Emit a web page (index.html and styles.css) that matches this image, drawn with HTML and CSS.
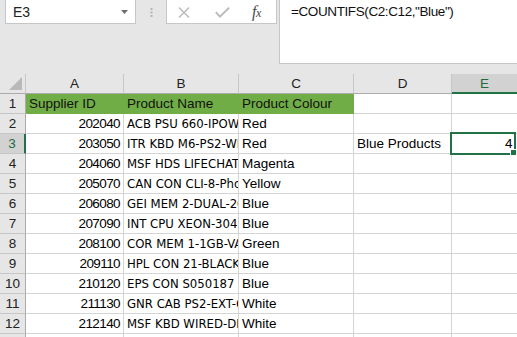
FILE: index.html
```html
<!DOCTYPE html>
<html>
<head>
<meta charset="utf-8">
<link rel="stylesheet" href="styles.css">
</head>
<body>
<div class="app">
  <div class="toolbar">
    <div class="namebox">
      <span class="ref">E3</span>
      <svg class="caret" width="7" height="4" viewBox="0 0 7 4"><path d="M0 0H7L3.5 4Z" fill="#6d6d6d"/></svg>
    </div>
    <div class="grip">
      <svg width="3" height="9" viewBox="0 0 3 9"><rect x="0.5" y="0" width="2" height="2" fill="#b4b4b4"/><rect x="0.5" y="3.5" width="2" height="2" fill="#b4b4b4"/><rect x="0.5" y="7" width="2" height="2" fill="#b4b4b4"/></svg>
    </div>
    <div class="fbtns">
      <svg class="ico-x" width="12" height="11" viewBox="0 0 12 11"><path d="M1 0.5L11 10.5M11 0.5L1 10.5" stroke="#b9b9b9" stroke-width="1.4" fill="none"/></svg>
      <svg class="ico-ok" width="15" height="11" viewBox="0 0 15 11"><path d="M0.8 5.2L5 9.6L14.2 0.6" stroke="#b9b9b9" stroke-width="1.8" fill="none"/></svg>
      <span class="fx">f<span class="fx-x">x</span></span>
    </div>
    <div class="formula">=COUNTIFS(C2:C12,"Blue")</div>
  </div>

  <div class="sheet">
    <div class="corner"><span class="tri"></span></div>
    <div class="colh">A</div>
    <div class="colh">B</div>
    <div class="colh">C</div>
    <div class="colh">D</div>
    <div class="colh sel">E</div>

    <div class="rowh">1</div>
    <div class="cell hdr">Supplier ID</div>
    <div class="cell hdr">Product Name</div>
    <div class="cell hdr">Product Colour</div>
    <div class="cell"></div>
    <div class="cell"></div>

    <div class="rowh">2</div>
    <div class="cell num">202040</div>
    <div class="cell cap">ACB PSU 660-IPOWER</div>
    <div class="cell">Red</div>
    <div class="cell"></div>
    <div class="cell"></div>

    <div class="rowh sel">3</div>
    <div class="cell num">203050</div>
    <div class="cell cap">ITR KBD M6-PS2-WHITE</div>
    <div class="cell">Red</div>
    <div class="cell">Blue Products</div>
    <div class="cell num active">4<span class="selbox"><span class="handle"></span></span></div>

    <div class="rowh">4</div>
    <div class="cell num">204060</div>
    <div class="cell cap">MSF HDS LIFECHAT-LX</div>
    <div class="cell">Magenta</div>
    <div class="cell"></div>
    <div class="cell"></div>

    <div class="rowh">5</div>
    <div class="cell num">205070</div>
    <div class="cell cap">CAN CON CLI-8-Photo</div>
    <div class="cell">Yellow</div>
    <div class="cell"></div>
    <div class="cell"></div>

    <div class="rowh">6</div>
    <div class="cell num">206080</div>
    <div class="cell cap">GEI MEM 2-DUAL-2GB</div>
    <div class="cell">Blue</div>
    <div class="cell"></div>
    <div class="cell"></div>

    <div class="rowh">7</div>
    <div class="cell num">207090</div>
    <div class="cell cap">INT CPU XEON-3040</div>
    <div class="cell">Blue</div>
    <div class="cell"></div>
    <div class="cell"></div>

    <div class="rowh">8</div>
    <div class="cell num">208100</div>
    <div class="cell cap">COR MEM 1-1GB-VALUE</div>
    <div class="cell">Green</div>
    <div class="cell"></div>
    <div class="cell"></div>

    <div class="rowh">9</div>
    <div class="cell num">209110</div>
    <div class="cell cap">HPL CON 21-BLACK</div>
    <div class="cell">Blue</div>
    <div class="cell"></div>
    <div class="cell"></div>

    <div class="rowh">10</div>
    <div class="cell num">210120</div>
    <div class="cell cap">EPS CON S050187</div>
    <div class="cell">Blue</div>
    <div class="cell"></div>
    <div class="cell"></div>

    <div class="rowh">11</div>
    <div class="cell num">211130</div>
    <div class="cell cap">GNR CAB PS2-EXT-6FT</div>
    <div class="cell">White</div>
    <div class="cell"></div>
    <div class="cell"></div>

    <div class="rowh">12</div>
    <div class="cell num">212140</div>
    <div class="cell cap">MSF KBD WIRED-DESKTOP</div>
    <div class="cell">White</div>
    <div class="cell"></div>
    <div class="cell"></div>

    <div class="rowh">13</div>
    <div class="cell"></div>
    <div class="cell"></div>
    <div class="cell"></div>
    <div class="cell"></div>
    <div class="cell"></div>
  </div>
</div>
</body>
</html>
```

FILE: styles.css
```css
html, body {
  margin: 0;
  padding: 0;
  background: #e6e6e6;
  overflow: hidden;
}
.app {
  width: 517px;
  height: 337px;
  overflow: hidden;
  font-family: "Liberation Sans", Arial, sans-serif;
  font-size: 13.5px;
  color: #000;
}
.toolbar {
  height: 74px;
  display: flex;
  align-items: flex-start;
  background: #e6e6e6;
}
.namebox {
  margin-top: -1px;
  margin-left: 5px;
  width: 131px;
  height: 25px;
  box-sizing: border-box;
  background: #fff;
  border: 1px solid #c6c6c6;
  display: flex;
  align-items: center;
  padding: 0 7px 0 7px;
}
.namebox .ref {
  flex: 1;
  font-size: 14px;
  color: #222;
  padding-top: 1px;
}
.grip {
  width: 30px;
  height: 24px;
  display: flex;
  align-items: center;
  justify-content: center;
  padding-top: 1px;
  box-sizing: border-box;
}
.fbtns {
  margin-top: -1px;
  width: 111px;
  height: 25px;
  box-sizing: border-box;
  background: #fff;
  border: 1px solid #c6c6c6;
  display: flex;
  align-items: center;
  padding-left: 11px;
}
.ico-x { margin-top: 1px; }
.ico-ok { margin-left: 25px; margin-top: 1px; }
.fx {
  margin-left: 22px;
  font-family: "Liberation Serif", "Times New Roman", serif;
  font-style: italic;
  font-size: 16px;
  color: #4a4a4a;
  letter-spacing: -0.5px;
}
.fx-x { font-size: 12px; }
.formula {
  margin-top: -1px;
  margin-left: 2px;
  flex: 1;
  height: 65px;
  box-sizing: border-box;
  background: #fff;
  border-left: 1px solid #c6c6c6;
  border-bottom: 1px solid #c6c6c6;
  padding: 3px 0 0 11px;
  line-height: 20px;
  letter-spacing: -0.4px;
  color: #111;
  white-space: nowrap;
}

.sheet {
  display: grid;
  grid-template-columns: 26px 98px 115px 115px 98px 66px;
  grid-auto-rows: 20px;
  background: #fff;
}
.sheet > div {
  box-sizing: border-box;
  border-right: 1px solid #d4d4d4;
  border-bottom: 1px solid #d4d4d4;
  line-height: 20px;
  white-space: nowrap;
  overflow: hidden;
}
.sheet > .corner {
  background: #e6e6e6;
  border-right: 1px solid #c6c6c6;
  border-bottom: 1px solid #ababab;
  position: relative;
}
.corner .tri {
  position: absolute;
  right: 3px;
  bottom: 3px;
  width: 0;
  height: 0;
  border-left: 13px solid transparent;
  border-bottom: 13px solid #b9b9b9;
}
.sheet > .colh {
  background: #e6e6e6;
  border-right: 1px solid #c6c6c6;
  border-bottom: 1px solid #ababab;
  text-align: center;
  color: #222;
}
.sheet > .colh.sel {
  background: #d2d2d2;
  border-bottom: 2px solid #217346;
  color: #1e6b40;
}
.sheet > .rowh {
  background: #e6e6e6;
  border-right: 1px solid #ababab;
  border-bottom: 1px solid #c6c6c6;
  text-align: center;
  color: #222;
  line-height: 19px;
}
.sheet > .rowh.sel {
  background: #d2d2d2;
  border-right: 2px solid #217346;
  color: #1e6b40;
}
.sheet > .cell {
  padding: 0 3px;
  line-height: 19px;
}
.sheet > .cell.cap {
  font-family: "DejaVu Sans Condensed", "DejaVu Sans", sans-serif;
  font-stretch: condensed;
  font-size: 13px;
}
.sheet > .cell.hdr {
  background: #70ad47;
  border-right-color: #70ad47;
  border-bottom-color: #70ad47;
  color: #111;
}
.sheet > .cell.num {
  text-align: right;
  letter-spacing: -0.6px;
  padding-right: 3px;
}
.sheet > .cell.active {
  position: relative;
  overflow: visible;
  padding-right: 5px;
}
.selbox {
  position: absolute;
  top: -2px;
  left: -2px;
  right: 1px;
  bottom: -2px;
  border: 2px solid #217346;
  box-sizing: border-box;
}
.handle {
  position: absolute;
  right: -3px;
  bottom: -3px;
  width: 5px;
  height: 5px;
  background: #217346;
  border: 1px solid #fff;
  box-sizing: content-box;
}
```
